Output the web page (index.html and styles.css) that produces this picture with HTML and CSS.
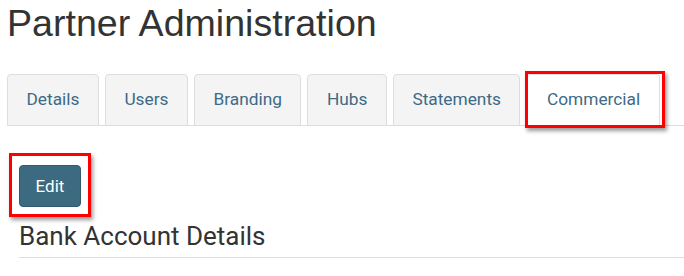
FILE: index.html
```html
<!doctype html>
<html lang="en">
  <head>
    <meta charset="UTF-8" />
    <title>Partner Administration</title>
    <link rel="stylesheet" href="styles.css">
  </head>
  <body>
    <h1 class="page-title">Partner Administration</h1>

    <ul class="nav-tabs">
      <li class="tab">Details</li>
      <li class="tab">Users</li>
      <li class="tab">Branding</li>
      <li class="tab">Hubs</li>
      <li class="tab">Statements</li>
      <li class="tab active">Commercial<span class="mark mark-tab"></span></li>
    </ul>

    <div class="panel">
      <div class="actions">
        <button class="btn">Edit<span class="mark mark-btn"></span></button>
      </div>
      <h2 class="section-title">Bank Account Details</h2>
    </div>
  </body>
</html>
```

FILE: styles.css
```css
body {
  margin: 0;
  background: #fff;
  font-family: Roboto, "Liberation Sans", sans-serif;
}

.page-title {
  margin: 0;
  padding: 2px 0 0 7px;
  font-family: "Liberation Sans", Arial, sans-serif;
  font-weight: normal;
  font-size: 37.6px;
  line-height: 42px;
  color: #333;
}

.nav-tabs {
  display: flex;
  gap: 6px;
  list-style: none;
  margin: 30px 0 0 7px;
  padding: 0;
  border-bottom: 1px solid #ddd;
}

.tab {
  position: relative;
  margin-bottom: -1px;
  padding: 15px 18.5px 16px;
  font-size: 17.3px;
  line-height: 19px;
  color: #3d6a86;
  background: #f4f4f4;
  border: 1px solid #ddd;
  border-radius: 4px 4px 0 0;
}

.tab.active {
  margin-left: 1px;
  background: #fff;
  border-bottom-color: #fff;
}

.mark {
  position: absolute;
  border: 3px solid #f00;
  box-shadow: 2px 3px 4px rgba(0, 0, 0, 0.4);
  pointer-events: none;
}

.mark-tab {
  left: -3px;
  top: -4px;
  right: -6px;
  bottom: -3px;
}

.panel {
  padding: 39px 0 0 19px;
}

.btn {
  position: relative;
  display: block;
  width: 62px;
  height: 42px;
  padding: 0;
  font-family: Roboto, sans-serif;
  font-size: 17px;
  color: #fff;
  background: #3c6a80;
  border: 1px solid #335c70;
  border-radius: 4px;
}

.mark-btn {
  left: -11px;
  top: -13px;
  right: -11px;
  bottom: -11px;
}

.section-title {
  margin: 12px 0 0;
  padding-bottom: 4px;
  font-weight: normal;
  font-size: 26px;
  line-height: 34px;
  color: #333;
  border-bottom: 1px solid #ddd;
}
```
